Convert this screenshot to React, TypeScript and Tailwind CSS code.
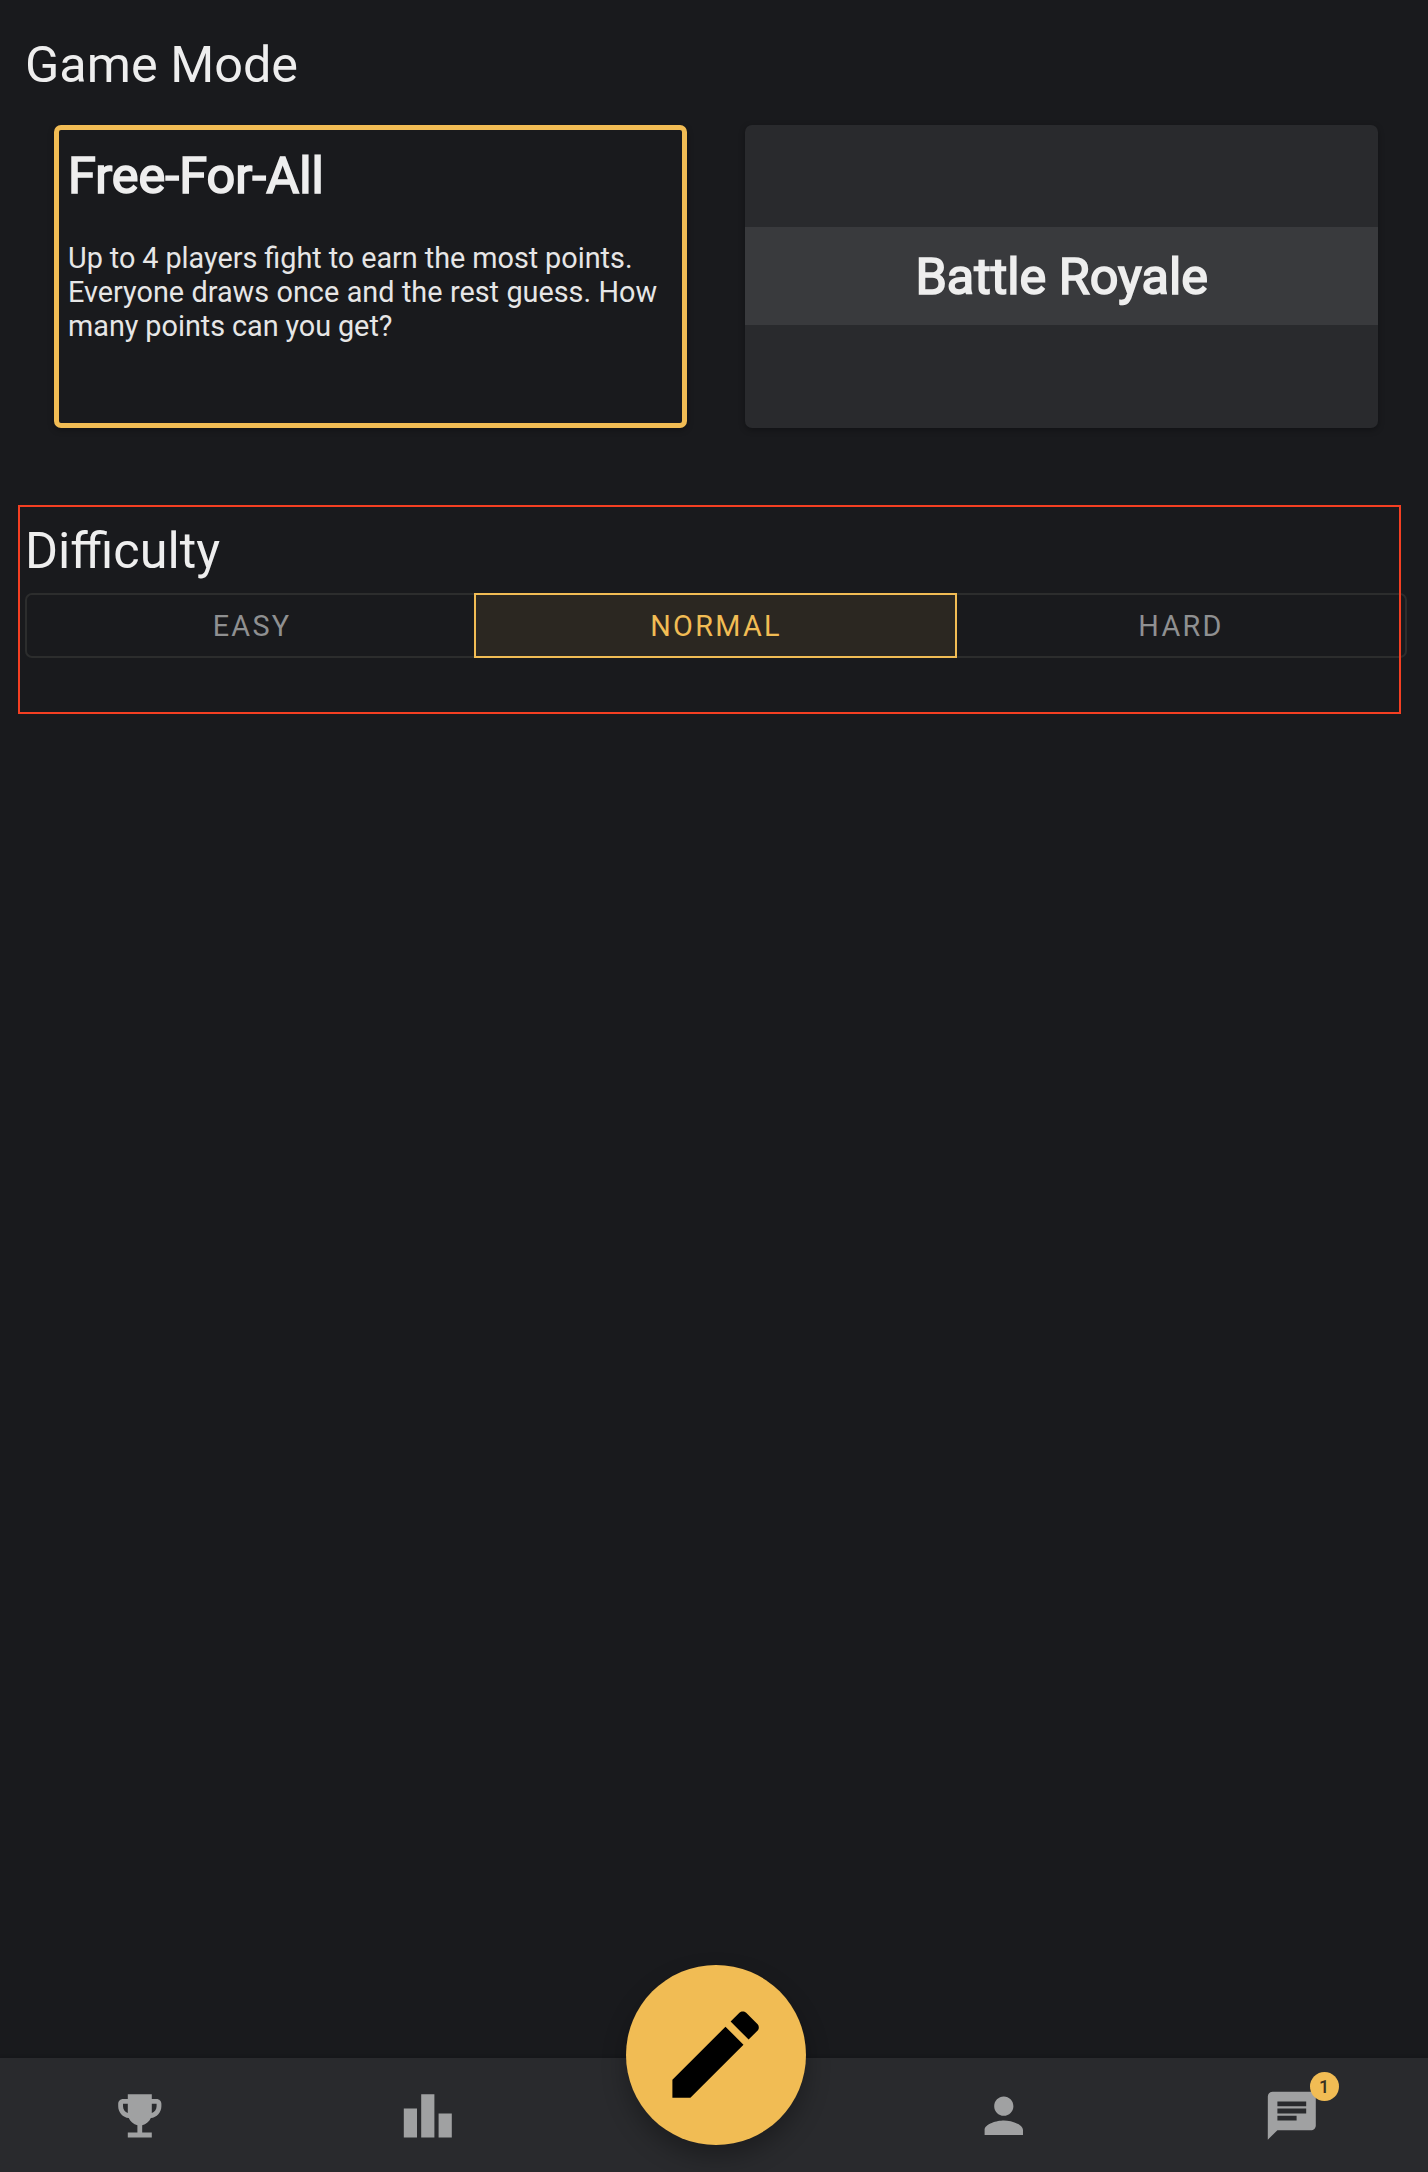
import React from "react";

const paths = {
  trophy:
    "M19 5h-2V3H7v2H5c-1.1 0-2 .9-2 2v1c0 2.55 1.92 4.63 4.39 4.94.63 1.5 1.98 2.63 3.61 2.96V19H7v2h10v-2h-4v-3.1c1.63-.33 2.98-1.46 3.61-2.96C19.08 12.63 21 10.55 21 8V7c0-1.1-.9-2-2-2zM5 8V7h2v3.82C5.84 10.4 5 9.3 5 8zm14 0c0 1.3-.84 2.4-2 2.82V7h2v1z",
  leaderboard: "M7.5 21H2V9h5.5v12zm7.25-18h-5.5v18h5.5V3zM22 11h-5.5v10H22V11z",
  pencil:
    "M3 17.25V21h3.75L17.81 9.94l-3.75-3.75L3 17.25zM20.71 7.04c.39-.39.39-1.02 0-1.41l-2.34-2.34c-.39-.39-1.02-.39-1.41 0l-1.83 1.83 3.75 3.75 1.83-1.83z",
  person:
    "M12 12c2.21 0 4-1.79 4-4s-1.79-4-4-4-4 1.79-4 4 1.79 4 4 4zm0 2c-2.67 0-8 1.34-8 4v2h16v-2c0-2.66-5.33-4-8-4z",
  chat: "M20 2H4c-1.1 0-1.99.9-1.99 2L2 22l4-4h14c1.1 0 2-.9 2-2V4c0-1.1-.9-2-2-2zM6 9h12v2H6V9zm8 5H6v-2h8v2zm4-6H6V6h12v2z",
};

function Icon({ name, className }: { name: keyof typeof paths; className: string }) {
  return (
    <svg viewBox="0 0 24 24" fill="currentColor" className={className}>
      <path d={paths[name]} />
    </svg>
  );
}

const navIcon = "size-[57.6px] text-[#a0a1a2]";
const cardTitle = "text-[50.4px] leading-[59px] text-[#eeeeee] [-webkit-text-stroke:1.7px_#eeeeee]";

export default function App() {
  return (
    <div className="flex h-[2172px] w-[1428px] flex-col overflow-hidden bg-[#191a1d] font-['Roboto',sans-serif] text-[#eeeeee]">
      <main className="isolate flex-1">
        <h2 className="ml-[25px] pt-[35px] text-[50.4px] leading-[59px]">Game Mode</h2>

        <section className="mt-[31px] ml-[53.5px] flex gap-[58px]">
          <button className="flex h-[303px] w-[633.4px] flex-col rounded-[7px] border-[5px] border-[#f1bc54] pt-[16px] pl-[9.5px] text-left shadow-[0_2px_6px_rgba(0,0,0,0.3)]">
            <span className={cardTitle}>Free-For-All</span>
            <span className="mt-[37px] text-[28.8px] leading-[33.75px] whitespace-nowrap text-[#e6e6e6]">
              <span className="[word-spacing:-0.2px]">Up to 4 players fight to earn the most points.</span>
              <br />
              <span className="[word-spacing:0.3px]">Everyone draws once and the rest guess. How</span>
              <br />
              <span className="[word-spacing:-0.3px]">many points can you get?</span>
            </span>
          </button>
          <button className="flex h-[303px] w-[633.6px] items-center rounded-[7px] bg-[#292a2d] shadow-[0_2px_6px_rgba(0,0,0,0.3)]">
            <span className="-mt-px flex h-[98px] w-full items-center justify-center bg-[#393a3d]">
              <span className={cardTitle}>Battle Royale</span>
            </span>
          </button>
        </section>

        <section className="mt-[77px] ml-[18px] h-[209px] w-[1383px] border-2 border-[#f43f22]">
          <h2 className="ml-[5px] pt-[14px] text-[50.4px] leading-[59px]">Difficulty</h2>
          <div className="relative -z-10 mt-[13px] ml-[5px] flex h-[65px] w-[1382px] text-[28.8px] leading-[34px] tracking-[2.3px] text-[#8f9091]">
            <button className="flex w-[449px] items-center justify-center rounded-l-[7px] border-[2.4px] border-r-0 border-[#2c2d2d] pl-[3px]">
              EASY
            </button>
            <button className="flex w-[483px] items-center justify-center border-2 border-[#f1bc54] bg-[#2b2721] pl-px text-[#f1bc54]">
              NORMAL
            </button>
            <button className="flex w-[450px] items-center justify-center rounded-r-[7px] border-[2.4px] border-l-0 border-[#2c2d2d]">
              HARD
            </button>
          </div>
        </section>
      </main>

      <nav className="-ml-1 grid h-[114px] w-[1440px] grid-cols-5 place-items-center bg-[#292a2d] pt-px shadow-[0_-2px_6px_rgba(0,0,0,0.15)]">
        <Icon name="trophy" className={navIcon} />
        <Icon name="leaderboard" className={navIcon} />
        <button className="-mt-[122px] flex size-[180px] items-center justify-center rounded-full bg-[#f1bc54] text-black shadow-[0_12px_24px_rgba(0,0,0,0.3)]">
          <Icon name="pencil" className="size-[115.2px]" />
        </button>
        <Icon name="person" className={navIcon} />
        <div className="relative">
          <Icon name="chat" className={navIcon} />
          <span className="absolute -top-[15px] left-[46.5px] flex size-[29px] items-center justify-center rounded-full bg-[#f1bc54] text-[18px] font-medium text-[#3a3020]">
            1
          </span>
        </div>
      </nav>
    </div>
  );
}
